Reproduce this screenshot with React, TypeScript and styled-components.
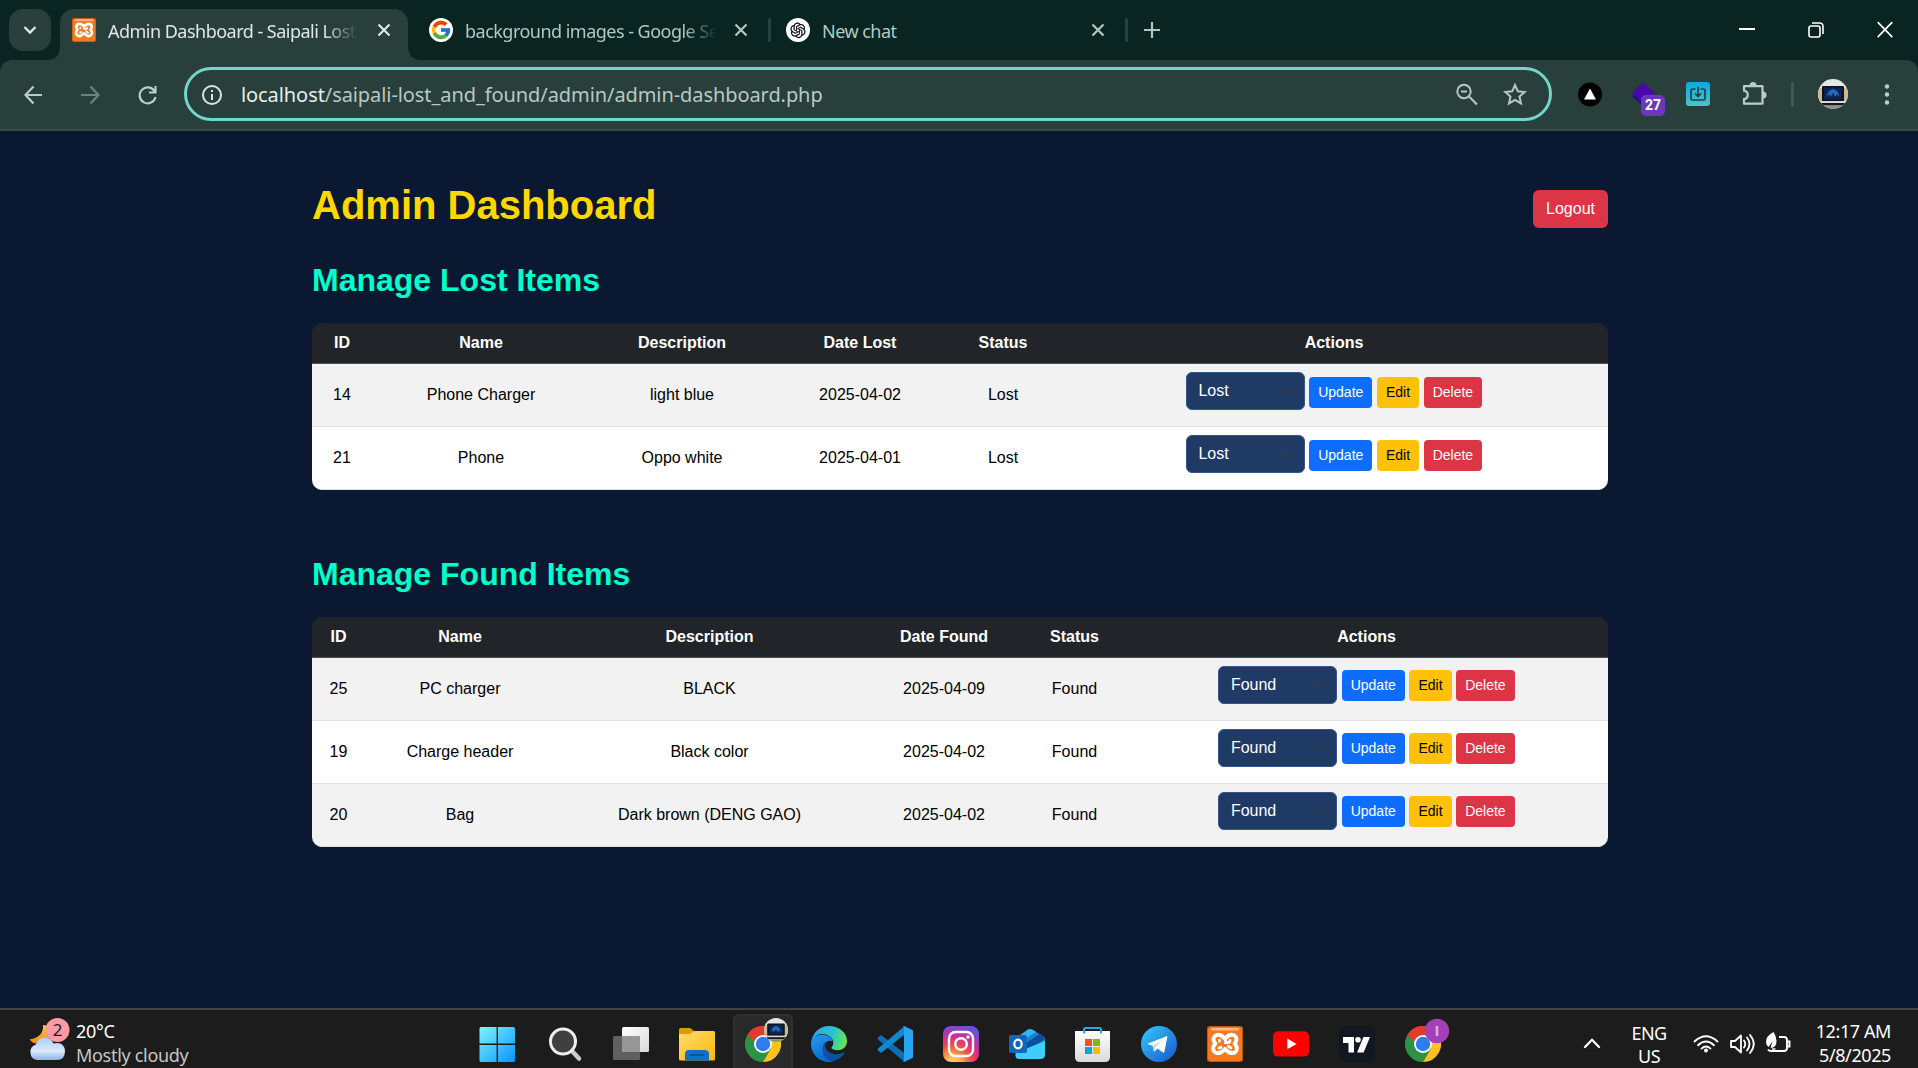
import React from "react";
import styled, { createGlobalStyle } from "styled-components";
import { FcGoogle } from "react-icons/fc";
import { AiOutlineOpenAI } from "react-icons/ai";

const GlobalStyle = createGlobalStyle`
  * { box-sizing: border-box; }
  body { margin: 0; background: #0a1931; overflow: hidden; }
  svg { display: block; flex: none; }
`;

const uiFont = `"Noto Sans", "Open Sans", sans-serif`;
const pageFont = `Arial, "Liberation Sans", sans-serif`;

const Screen = styled.div`
  width: 1918px;
  height: 1068px;
  display: flex;
  flex-direction: column;
  overflow: hidden;
  background: #0a1931;
`;

/* ---------- browser frame ---------- */

const TabStrip = styled.div`
  height: 60px;
  flex: none;
  display: flex;
  align-items: flex-start;
  padding: 9px 0 0 9px;
  background: #0a2421;
  font-family: ${uiFont};
`;

const TabSearch = styled.div`
  width: 42px;
  height: 42px;
  flex: none;
  display: flex;
  align-items: center;
  justify-content: center;
  border-radius: 14px;
  background: #283f3b;
`;

const Tab = styled.div<{ $width: number; $active?: boolean }>`
  position: relative;
  width: ${(p) => p.$width}px;
  height: ${(p) => (p.$active ? 51 : 42)}px;
  flex: none;
  display: flex;
  align-items: flex-start;
  padding: 9px 0 0 12px;
  border-radius: 14px 14px 0 0;
  background: ${(p) => (p.$active ? "#283f3b" : "transparent")};
  color: ${(p) => (p.$active ? "#dfe8e5" : "#afcac4")};
`;

const TabFlare = styled.svg<{ $side: "left" | "right" }>`
  position: absolute;
  bottom: 0;
  ${(p) => p.$side}: -14px;
`;

const TabTitle = styled.div<{ $width: number; $fade?: boolean }>`
  width: ${(p) => p.$width}px;
  margin-left: 12px;
  height: 26px;
  line-height: 26px;
  font-size: 18px;
  letter-spacing: -0.52px;
  white-space: nowrap;
  ${(p) =>
    p.$fade &&
    "mask-image: linear-gradient(to right, #000 calc(100% - 34px), transparent);"}
`;

const CloseMark = styled.div<{ $left: number }>`
  margin: 5px 0 0 ${(p) => p.$left}px;
`;

const TabDivider = styled.div<{ $left: number }>`
  width: 3px;
  height: 24px;
  flex: none;
  margin: 9px 0 0 ${(p) => p.$left}px;
  border-radius: 2px;
  background: #28413c;
`;

const RoundIcon = styled.div<{ $size: number; $bg: string }>`
  width: ${(p) => p.$size}px;
  height: ${(p) => p.$size}px;
  flex: none;
  display: flex;
  align-items: center;
  justify-content: center;
  border-radius: 50%;
  overflow: hidden;
  background: ${(p) => p.$bg};
`;

const NewTab = styled.div`
  margin: 13px 0 0 16px;
`;

const WindowControls = styled.div`
  display: flex;
  gap: 53px;
  margin: 12px 25px 0 auto;
`;

const ToolbarBack = styled.div`
  flex: none;
  background: #0a2421;
`;

const Toolbar = styled.div`
  height: 71px;
  display: flex;
  align-items: flex-start;
  padding: 7px 0 0 22px;
  border-radius: 12px 12px 0 0;
  border-bottom: 2px solid #3a4c47;
  background: #283f3b;
  font-family: ${uiFont};
`;

const ToolbarRow = styled.div`
  height: 54px;
  flex: 1;
  display: flex;
  align-items: center;
`;

const Slot = styled.div<{ $left?: number }>`
  flex: none;
  display: flex;
  margin-left: ${(p) => p.$left ?? 0}px;
`;

const AddressBar = styled.div`
  width: 1368px;
  height: 54px;
  flex: none;
  display: flex;
  align-items: center;
  margin-left: 26px;
  padding: 0 21px 0 13px;
  border: 3px solid #72d6c8;
  border-radius: 27px;
`;

const Url = styled.div`
  margin: 2px auto 0 19px;
  font-size: 20px;
  letter-spacing: -0.08px;
  line-height: 28px;
  color: #b9c8c4;
  white-space: nowrap;
  span { color: #e4efec; }
`;

const PurpleExtension = styled.div`
  position: relative;
  width: 34px;
  height: 24px;
  flex: none;
  margin-left: 29px;
`;

const ExtensionBadge = styled.div`
  position: absolute;
  left: 10px;
  top: 13px;
  width: 24px;
  height: 21px;
  border-radius: 5px;
  background: #6c38bb;
  color: #fff;
  font: bold 14px/21px Roboto, sans-serif;
  text-align: center;
`;

const ToolbarDivider = styled.div`
  width: 3px;
  height: 25px;
  flex: none;
  margin-left: 24px;
  border-radius: 2px;
  background: #3f5a55;
`;

/* ---------- dashboard page ---------- */

const Page = styled.main`
  flex: 1;
  min-height: 0;
  padding: 49px 310px 0 312px;
  background: #0a1931;
  font-family: ${pageFont};
`;

const PageHeader = styled.header`
  height: 48px;
  display: flex;
  justify-content: space-between;
`;

const Title = styled.h1`
  margin: 1px 0 0;
  font-size: 40px;
  line-height: 48px;
  color: #ffd700;
`;

const Logout = styled.button`
  width: 75px;
  height: 38px;
  margin-top: 10px;
  padding: 0;
  border: 0;
  border-radius: 6px;
  background: #dc3545;
  color: #fff;
  font: 16px/38px ${pageFont};
`;

const SectionTitle = styled.h2<{ $top: number }>`
  margin: ${(p) => p.$top}px 0 0;
  padding-bottom: 24px;
  font-size: 32px;
  line-height: 38px;
  color: #00ffcc;
`;

const TableCard = styled.div`
  width: 1296px;
  border-radius: 10px;
  overflow: hidden;
`;

const Table = styled.table`
  width: 100%;
  table-layout: fixed;
  border-collapse: separate;
  border-spacing: 0;
  font-size: 16px;
  line-height: 24px;
  text-align: center;
  color: #000;
`;

const HeadCell = styled.th<{ $width: number }>`
  width: ${(p) => p.$width}px;
  height: 41px;
  padding: 0 0 1px;
  border-bottom: 1px solid #4d5154;
  background: #212529;
  color: #fff;
`;

const BodyRow = styled.tr`
  background: #fff;
  &:nth-child(odd) { background: #f2f2f2; }
`;

const Cell = styled.td`
  height: 63px;
  padding: 0;
  border-bottom: 1px solid #dee2e6;
`;

const Actions = styled.div<{ $drop: number }>`
  height: 62px;
  display: flex;
  justify-content: center;
  align-items: flex-start;
  gap: 4.6px;
  padding-top: ${(p) => 12 + p.$drop}px;
`;

const StatusSelect = styled.div<{ $drop: number }>`
  width: 118.7px;
  height: 38px;
  display: flex;
  align-items: center;
  justify-content: space-between;
  margin-top: ${(p) => -4 - p.$drop}px;
  padding: 0 14px 0 11.5px;
  border: 1px solid #34568b;
  border-radius: 6px;
  background: #1f3a64;
  color: #fff;
`;

const SmallButton = styled.button<{ $bg: string; $fg?: string }>`
  height: 31px;
  padding: 0 9px;
  border: 0;
  border-radius: 4px;
  background: ${(p) => p.$bg};
  color: ${(p) => p.$fg ?? "#fff"};
  font: 14px/31px ${pageFont};
`;

/* ---------- taskbar ---------- */

const Taskbar = styled.footer`
  height: 60px;
  flex: none;
  display: flex;
  align-items: flex-start;
  border-top: 2px solid #424242;
  background: #1c1c1c;
  color: #fff;
  font-family: ${uiFont};
  font-size: 18px;
  line-height: 24px;
  overflow: hidden;
`;

const Weather = styled.div`
  width: 469px;
  flex: none;
  display: flex;
  padding: 8px 0 0 27px;
`;

const WeatherText = styled.div`
  margin: 1px 0 0 6px;
  letter-spacing: -0.3px;
  white-space: nowrap;
  div + div { color: #c6c6c6; }
`;

const Apps = styled.div`
  display: flex;
  gap: 6px;
  padding-top: 4px;
`;

const TaskbarApp = styled.div<{ $active?: boolean }>`
  position: relative;
  width: 60px;
  height: 60px;
  flex: none;
  display: flex;
  justify-content: center;
  padding-top: 12px;
  border-radius: 6px;
  background: ${(p) => (p.$active ? "#292929" : "transparent")};
  box-shadow: ${(p) => (p.$active ? "inset 0 0 0 2px #303030" : "none")};
`;

const AppBadge = styled.div`
  position: absolute;
  left: 31px;
  top: 4px;
`;

const Tray = styled.div`
  display: flex;
  align-items: flex-start;
  margin-left: auto;
  padding-right: 27px;
`;

const Language = styled.div`
  width: 44px;
  margin: 12px 0 0 26px;
  line-height: 23px;
  letter-spacing: -0.6px;
  text-align: center;
`;

const Clock = styled.div`
  width: 90px;
  margin: 9px 0 0 10px;
  letter-spacing: -0.4px;
  text-align: right;
  white-space: nowrap;
`;

/* ---------- drawings ---------- */

const Cross = ({ color }: { color: string }) => (
  <svg width="14" height="14" viewBox="0 0 14 14" stroke={color} strokeWidth="2.2">
    <path d="M1.5 1.5 12.5 12.5M12.5 1.5 1.5 12.5" />
  </svg>
);

const XamppIcon = ({ size }: { size: number }) => (
  <svg width={size} height={size} viewBox="0 0 36 36" fill="none">
    <rect width="36" height="36" rx="3" fill="#b95a16" />
    <rect x="1" y="1" width="34" height="34" rx="3" fill="#f47920" />
    <rect x="4" y="2" width="28" height="2.5" rx="1.2" fill="#fbb785" />
    <path
      d="M11.500 8.800c-3 0-5 2-5 4.500 0 2 .9 3.300 1.900 4.400-1.400 1.200-2.300 2.800-2.300 4.500 0 2.800 2.200 4.900 5 4.900 3.200 0 4.700-2 6.900-4.300 2.200 2.300 3.700 4.300 6.900 4.300 2.800 0 5-2.100 5-4.900 0-1.700-.9-3.300-2.300-4.500 1-1.100 1.900-2.400 1.900-4.400 0-2.500-2-4.500-5-4.500-3.200 0-4.300 1.500-6.500 4-2.200-2.500-3.300-4-6.500-4z"
      stroke="#fff"
      strokeWidth="4"
      strokeLinejoin="round"
    />
    <path d="M12.500 14.500v.8M23 14.500c0 1.300-.8 2-2.300 2h-2.200v-3M12 22l2-.9M24 22l-2.500-1.700" stroke="#fff" strokeWidth="2.800" strokeLinecap="round" />
  </svg>
);

const LaptopAvatar = ({ size }: { size: number }) => (
  <svg width={size} height={size} viewBox="0 0 30 30">
    <clipPath id={`avatar${size}`}><circle cx="15" cy="15" r="15" /></clipPath>
    <g clipPath={`url(#avatar${size})`}>
      <rect width="30" height="30" fill="#e6e6e8" />
      <rect y="9" width="30" height="14" fill="#cbb994" />
      <rect x="4" y="7" width="22" height="15.500" rx="1" fill="#10131c" />
      <rect x="6" y="8.500" width="18" height="12" fill="#0a2450" />
      <path d="M8.500 18q1-7 6.500-8 5.500 1 6.500 8l-2.500-3-1.500 3-2.500-4-2.500 4-1.500-3z" fill="#2469bd" />
      <rect x="1" y="22" width="28" height="2" fill="#d9d9dd" />
      <rect y="24" width="30" height="2.500" fill="#17181c" />
      <rect y="26.500" width="30" height="4" fill="#8f8f94" />
    </g>
  </svg>
);

const ChromeIcon = () => (
  <svg width="36" height="36" viewBox="0 0 36 36">
    <path d="M18 18 2.400 9A18 18 0 0 1 33.600 9z" fill="#e33b2e" />
    <path d="M2.400 9A18 18 0 0 0 18 36l7.800-13.500L18 18z" fill="#2d9344" />
    <path d="M33.600 9A18 18 0 0 1 18 36l7.800-13.500L18 9z" fill="#fcc31e" />
    <path d="M2.400 9 10.200 22.500 18 18V9z" fill="#2d9344" />
    <path d="M2.400 9A18 18 0 0 1 33.600 9H18a9 9 0 0 0-8.800 7.200L5.500 12z" fill="#e33b2e" />
    <circle cx="18" cy="18" r="9" fill="#fff" />
    <circle cx="18" cy="18" r="7.200" fill="#2f7cf0" />
  </svg>
);

const WindowsIcon = () => (
  <svg width="36" height="36" viewBox="0 0 36 36" overflow="visible">
    <linearGradient id="win" x1="0" y1="0" x2="1" y2="1">
      <stop stopColor="#80f3ff" /><stop offset="1" stopColor="#0794ff" />
    </linearGradient>
    <path d="M0 1h15.600v16.600H-1.500V2.500Q-1.500 1 0 1zM17 1h15.500q1.500 0 1.500 1.500v15.100H17zM-1.500 19h17.100v17H0q-1.500 0-1.500-1.500zM17 19h17v15.500q0 1.500-1.500 1.500H17z" fill="url(#win)" />
  </svg>
);

const SearchIcon = () => (
  <svg width="36" height="36" viewBox="0 0 36 36">
    <path d="m25 25 7 7.500" stroke="#c9ccd0" strokeWidth="4.500" strokeLinecap="round" />
    <circle cx="16" cy="15.500" r="12.500" fill="#3f3f3f" stroke="#eceef0" strokeWidth="3" />
  </svg>
);

const TaskViewIcon = () => (
  <svg width="36" height="36" viewBox="0 0 36 36">
    <linearGradient id="tv" x1="0" y1="0" x2="1" y2="1"><stop stopColor="#fff" /><stop offset="1" stopColor="#d9d9d9" /></linearGradient>
    <rect y="10" width="27" height="24" rx="1.500" fill="#606060" />
    <rect x="9" y="1" width="27" height="25" rx="1.500" fill="url(#tv)" />
    <path d="M9 10h18v16H9z" fill="#969696" />
  </svg>
);

const FolderIcon = () => (
  <svg width="36" height="36" viewBox="0 0 36 36">
    <linearGradient id="fold" x1="0" y1="0" x2="1" y2="1"><stop stopColor="#ffdc6c" /><stop offset="1" stopColor="#fbb80f" /></linearGradient>
    <path d="M0 4q0-2 2-2h8q1.500 0 2.500 1l3 2.500V10H0z" fill="#dd9c06" />
    <path d="M0 8h10q1.500 0 3-1.500T16 5h18.500q1.500 0 1.500 1.500V33q0 1.500-1.500 1.500h-33Q0 34.500 0 33z" fill="url(#fold)" />
    <path d="M6 34.500V28q0-4 4-4h16q4 0 4 4v6.500z" fill="#0f71c4" />
    <path d="M11 29h14" stroke="#0a4a8a" strokeWidth="1.500" strokeLinecap="round" />
  </svg>
);

const EdgeIcon = () => (
  <svg width="36" height="36" viewBox="0 0 36 36">
    <linearGradient id="edgeTop" x1="0" y1=".3" x2="1" y2=".5"><stop stopColor="#2aa7ec" /><stop offset=".55" stopColor="#27c3cf" /><stop offset="1" stopColor="#66e552" /></linearGradient>
    <linearGradient id="edgeSide" x1="0" y1="0" x2=".4" y2="1"><stop stopColor="#249ce8" /><stop offset="1" stopColor="#0a6ad0" /></linearGradient>
    <path d="M.3 17C.8 7 8.500 0 18 0c10.500 0 18 7 18 15 0 5.500-4 9.300-9 9.300-4 0-6.500-1.300-6.500-2.500 0-1 1.800-1.800 1.800-5C22.300 11 16 8 11 8 5 8 1.500 12 .3 17z" fill="url(#edgeTop)" />
    <path d="M0 18C0 12 5 8.800 11 8.800c6 0 10.500 3 10.500 6.500-5-2-9.500 2-9.500 8 0 6 4.500 11.500 11 11.700C21.500 35.700 20 36 18 36 8 36 0 28 0 18z" fill="url(#edgeSide)" />
    <path d="M15 15.500c-2 1.800-3.500 4.500-3.500 8C11.500 30 17 35 23 35c4.500-1.300 8-4 10.300-7.500.5-.8-.2-1.300-1-.9-8 3.800-18 .400-18-7.600 0-1.500.2-2.500.7-3.500z" fill="#11509f" />
  </svg>
);

const VsCodeIcon = () => (
  <svg width="36" height="36" viewBox="0 0 36 36">
    <path d="M1 11.500 3 9.700q1-.8 2 0L27 27v8.500L1 13.500q-1-1 0-2z" fill="#0b6fb5" />
    <path d="M1 24.500 3 26.300q1 .8 2 0L27 9V.5L1 22.500q-1 1 0 2z" fill="#1187ce" />
    <path d="M26 .5q.7-.7 1.700-.2L35 3.800q1 .5 1 1.500v25.400q0 1-1 1.500l-7.300 3.500q-1 .5-1.700-.2 1-.5 1-2V2.500q0-1.500-1-2z" fill="#28a3f0" />
  </svg>
);

const InstagramIcon = () => (
  <svg width="36" height="36" viewBox="0 0 36 36" fill="none">
    <radialGradient id="ig" cx=".28" cy="1.05" r="1.100"><stop stopColor="#ffdc70" /><stop offset=".2" stopColor="#fdb650" /><stop offset=".45" stopColor="#f5503f" /><stop offset=".7" stopColor="#cf2c94" /><stop offset="1" stopColor="#6255d6" /></radialGradient>
    <rect width="36" height="36" rx="8" fill="url(#ig)" />
    <rect x="6" y="6" width="24" height="24" rx="6.500" stroke="#fff" strokeWidth="2.400" />
    <circle cx="18" cy="18" r="5.800" stroke="#fff" strokeWidth="2.400" />
    <circle cx="25" cy="11" r="1.700" fill="#fff" />
  </svg>
);

const OutlookIcon = () => (
  <svg width="36" height="36" viewBox="0 0 36 36">
    <path d="M8 11 19 3.500q2-1 4 0L34 10q2 1.200 2 3v8L22 30H8z" fill="#1683d8" />
    <path d="M9 11 19 3.500q2-1 4 0l4 2.300L12 16H9z" fill="#35b4ee" />
    <path d="M17 17 30.500 8l3.500 2q2 1.200 2 3l-18 12z" fill="#0a4fa0" />
    <path d="M6.500 27 36 15v13.500q0 4.500-4.500 4.500H10.500q-4 0-4-3z" fill="#40cdf7" />
    <rect y="9" width="18" height="18" rx="2" fill="#0f67bd" />
    <ellipse cx="9" cy="18" rx="3.700" ry="4.300" fill="none" stroke="#fff" strokeWidth="2.200" />
  </svg>
);

const StoreIcon = () => (
  <svg width="36" height="36" viewBox="0 0 36 36">
    <linearGradient id="store" x1="0" y1="0" x2="0" y2="1"><stop stopColor="#fff" /><stop offset="1" stopColor="#d9d9d9" /></linearGradient>
    <path d="M0 5h35v26q0 5-5 5H5q-5 0-5-5z" fill="url(#store)" />
    <path d="M9 7.500V3.500q0-1.500 1.500-1.500h14q1.500 0 1.500 1.500v4" fill="none" stroke="#27a9e0" strokeWidth="2" />
    <path d="M10 13h7v7h-7z" fill="#f25022" /><path d="M18 13h7v7h-7z" fill="#7fba00" />
    <path d="M10 21h7v7h-7z" fill="#00a4ef" /><path d="M18 21h7v7h-7z" fill="#ffb900" />
  </svg>
);

const TelegramIcon = () => (
  <svg width="36" height="36" viewBox="0 0 36 36">
    <linearGradient id="tg" x1=".1" y1=".1" x2=".9" y2=".9"><stop stopColor="#2fc0fb" /><stop offset="1" stopColor="#1e5fd0" /></linearGradient>
    <circle cx="18" cy="18" r="18" fill="url(#tg)" />
    <path d="M7 17.600 25.500 10.300q1-.3.8 1L23.300 26q-.3 1.200-1.300.6l-5.500-4-2.800 2.600q-.8.6-1-.4l-1-5-4.700-1.500q-.8-.4 0-.7z" fill="#fff" />
    <path d="m12.500 19.500 9.500-6-7.500 7.200-.8 4.200z" fill="#b9d6f3" />
  </svg>
);

const YoutubeIcon = () => (
  <svg width="36" height="36" viewBox="0 0 36 36">
    <rect y="5.200" width="36" height="25.400" rx="5" fill="#f00" />
    <path d="m14.300 12.500 9.300 5.400-9.300 5.400z" fill="#fff" />
  </svg>
);

const TradingViewIcon = () => (
  <svg width="36" height="36" viewBox="0 0 36 36">
    <rect width="36" height="36" rx="6" fill="#131722" />
    <g fill="#fff"><path d="M4 11h11v15.500H9.500V17H4z" /><circle cx="19" cy="13.800" r="2.800" /><path d="M24.500 11H31l-6.400 15.500h-6.500z" /></g>
  </svg>
);

const WeatherIcon = () => (
  <svg width="43" height="42" viewBox="0 0 43 42">
    <linearGradient id="moon" x1="0" y1="0" x2="0" y2="1"><stop stopColor="#ffc83d" /><stop offset="1" stopColor="#f08a1d" /></linearGradient>
    <linearGradient id="cloud" x1="0" y1="0" x2="0" y2="1"><stop stopColor="#a9cdf8" /><stop offset=".6" stopColor="#dce9fa" /><stop offset="1" stopColor="#8ab2f0" /></linearGradient>
    <path d="M16 7q1 12-13.500 14.500Q7 27 15 26L29 13Q22 7 16 7z" fill="url(#moon)" />
    <path d="M10 42a8 8 0 0 1-1-15.500Q11 19.500 18 19.500q6 0 8.500 6Q37 23 38 33q0 9-8 9z" fill="url(#cloud)" />
    <circle cx="30.500" cy="12" r="12" fill="#ff99a4" />
    <text x="30.500" y="18" textAnchor="middle" fontSize="17" fontFamily="Noto Sans, sans-serif" fill="#1b1b1b">2</text>
  </svg>
);

/* ---------- data ---------- */

type Item = [string, string, string, string, string];

const lostItems: Item[] = [
  ["14", "Phone Charger", "light blue", "2025-04-02", "Lost"],
  ["21", "Phone", "Oppo white", "2025-04-01", "Lost"],
];

const foundItems: Item[] = [
  ["25", "PC charger", "BLACK", "2025-04-09", "Found"],
  ["19", "Charge header", "Black color", "2025-04-02", "Found"],
  ["20", "Bag", "Dark brown (DENG GAO)", "2025-04-02", "Found"],
];

const ItemsTable = ({
  dateLabel,
  widths,
  items,
  drop,
}: {
  dateLabel: string;
  widths: number[];
  items: Item[];
  drop: number;
}) => (
  <TableCard>
    <Table>
      <thead>
        <tr>
          {["ID", "Name", "Description", dateLabel, "Status", "Actions"].map((h, i) => (
            <HeadCell key={h} $width={widths[i]}>{h}</HeadCell>
          ))}
        </tr>
      </thead>
      <tbody>
        {items.map((item) => (
          <BodyRow key={item[0]}>
            {item.map((value, i) => <Cell key={i}>{value}</Cell>)}
            <Cell>
              <Actions $drop={drop}>
                <StatusSelect $drop={drop}>
                  {item[4]}
                  <svg width="12" height="12" viewBox="0 0 16 16" fill="none" stroke="#343a40" strokeWidth="2" strokeLinecap="round">
                    <path d="m2 5 6 6 6-6" />
                  </svg>
                </StatusSelect>
                <SmallButton $bg="#0d6efd">Update</SmallButton>
                <SmallButton $bg="#ffc107" $fg="#000">Edit</SmallButton>
                <SmallButton $bg="#dc3545">Delete</SmallButton>
              </Actions>
            </Cell>
          </BodyRow>
        ))}
      </tbody>
    </Table>
  </TableCard>
);

const appIcons = [
  WindowsIcon, SearchIcon, TaskViewIcon, FolderIcon, ChromeIcon, EdgeIcon, VsCodeIcon,
  InstagramIcon, OutlookIcon, StoreIcon, TelegramIcon, () => <XamppIcon size={36} />,
  YoutubeIcon, TradingViewIcon, ChromeIcon,
];

export default function App() {
  return (
    <Screen>
      <GlobalStyle />
      <TabStrip>
        <TabSearch>
          <svg width="14" height="14" viewBox="0 0 14 14" fill="none" stroke="#dfe8e5" strokeWidth="2.400">
            <path d="m1.500 4 5.500 5.500L12.500 4" />
          </svg>
        </TabSearch>
        <Slot $left={9} />
        <Tab $width={348} $active>
          <TabFlare $side="left" width="14" height="14"><path d="M14 0v14H0Q14 14 14 0z" fill="#283f3b" /></TabFlare>
          <XamppIcon size={24} />
          <TabTitle $width={250} $fade>Admin Dashboard - Saipali Lost</TabTitle>
          <CloseMark $left={19}><Cross color="#dfe8e5" /></CloseMark>
          <TabFlare $side="right" width="14" height="14"><path d="M0 0v14h14Q0 14 0 0z" fill="#283f3b" /></TabFlare>
        </Tab>
        <Slot $left={9} />
        <Tab $width={351}>
          <RoundIcon $size={24} $bg="#fff"><FcGoogle size={22} /></RoundIcon>
          <TabTitle $width={252} $fade>background images - Google Se</TabTitle>
          <CloseMark $left={17}><Cross color="#afcac4" /></CloseMark>
        </Tab>
        <TabDivider $left={0} />
        <Slot $left={3} />
        <Tab $width={351}>
          <RoundIcon $size={24} $bg="#fff"><AiOutlineOpenAI size={20} color="#111" /></RoundIcon>
          <TabTitle $width={252}>New chat</TabTitle>
          <CloseMark $left={17}><Cross color="#afcac4" /></CloseMark>
        </Tab>
        <TabDivider $left={0} />
        <NewTab>
          <svg width="16" height="16" stroke="#afcac4" strokeWidth="2.200"><path d="M8 0v16M0 8h16" /></svg>
        </NewTab>
        <WindowControls>
          <svg width="16" height="18" stroke="#fff" strokeWidth="2"><path d="M0 8h16" /></svg>
          <svg width="16" height="18" fill="none" stroke="#fff" strokeWidth="1.600">
            <rect x="1" y="5" width="11" height="11" rx="2" />
            <path d="M4 2h7.500Q15 2 15 5.500V13" />
          </svg>
          <svg width="16" height="18" stroke="#fff" strokeWidth="1.700"><path d="m.7 1.200 14.600 15M15.300 1.200.7 16.200" /></svg>
        </WindowControls>
      </TabStrip>
      <ToolbarBack>
        <Toolbar>
          <ToolbarRow>
            <svg width="22" height="22" fill="none" stroke="#b5cfc9" strokeWidth="2.200"><path d="M20 12H4M11.500 3.500 3.500 12l8 8.500" /></svg>
            <Slot $left={36}>
              <svg width="22" height="22" fill="none" stroke="#6b827d" strokeWidth="2.200"><path d="M1 12h17M10.500 3.500l8 8.500-8 8.500" /></svg>
            </Slot>
            <Slot $left={34}>
              <svg width="22" height="22" fill="none" stroke="#b5cfc9" strokeWidth="2.200"><path d="M18.700 8.500A8 8 0 1 0 19.500 14M19.500 3V9.500H13" /></svg>
            </Slot>
            <AddressBar>
              <svg width="22" height="24" fill="none" stroke="#dbe8e5" strokeWidth="2">
                <circle cx="12" cy="13" r="9" /><path d="M12 12v6M12 8v2" />
              </svg>
              <Url><span>localhost</span>/saipali-lost_and_found/admin/admin-dashboard.php</Url>
              <svg width="24" height="24" fill="none" stroke="#b9c8c4" strokeWidth="2">
                <circle cx="9" cy="9.500" r="6.700" /><path d="M6 9.500h6M14 14.500l8 8" />
              </svg>
              <Slot $left={23}>
                <svg width="26" height="26" viewBox="0 0 26 26" fill="none" stroke="#b9c8c4" strokeWidth="2">
                  <path d="m13 4 2.800 6.300 6.900.7-5.200 4.600 1.500 6.800-6-3.600-6 3.600 1.500-6.800L3.300 11l6.900-.7z" />
                </svg>
              </Slot>
            </AddressBar>
            <Slot $left={26}>
              <svg width="24" height="26"><circle cx="12" cy="13.500" r="12" /><path d="m12 7.500 6 11H6z" fill="#fff" /></svg>
            </Slot>
            <PurpleExtension>
              <svg width="24" height="24"><path d="m1 14 4-3 12 9-5 4z" fill="#25107a" /><path d="M1 10.500 12 1l12 9.500L12 21z" fill="#4709ad" /></svg>
              <ExtensionBadge>27</ExtensionBadge>
            </PurpleExtension>
            <Slot $left={21}>
              <svg width="24" height="24" fill="none">
                <linearGradient id="dl" x1="0" y1="0" x2="0" y2="1"><stop stopColor="#08a9e2" /><stop offset="1" stopColor="#4dc4c4" /></linearGradient>
                <rect width="24" height="24" rx="3" fill="url(#dl)" />
                <path d="M9.500 7H6.500Q5 7 5 8.500v8Q5 18 6.500 18h11q1.500 0 1.500-1.500v-8Q19 7 17.500 7h-3M12 5v9M9 11.500l3 3 3-3" stroke="#1d4148" strokeWidth="1.700" />
              </svg>
            </Slot>
            <Slot $left={31}>
              <svg width="26" height="26" fill="none" stroke="#b5cfc9" strokeWidth="2.200" strokeLinejoin="round">
                <path d="M3 5.200h18.500v17.500H3v-4.500c5-1 5-7.500 0-8.500z" />
                <path d="M9.500 4.500a2.500 2.500 0 0 1 5 0M22 11.500a2.500 2.500 0 0 1 0 5" fill="#b5cfc9" />
              </svg>
            </Slot>
            <ToolbarDivider />
            <Slot $left={24}><LaptopAvatar size={30} /></Slot>
            <Slot $left={36}>
              <svg width="6" height="22" fill="#b5cfc9"><circle cx="3" cy="3.500" r="2.200" /><circle cx="3" cy="11.500" r="2.200" /><circle cx="3" cy="19.500" r="2.200" /></svg>
            </Slot>
          </ToolbarRow>
        </Toolbar>
      </ToolbarBack>

      <Page>
        <PageHeader>
          <Title>Admin Dashboard</Title>
          <Logout>Logout</Logout>
        </PageHeader>
        <SectionTitle $top={33}>Manage Lost Items</SectionTitle>
        <ItemsTable dateLabel="Date Lost" widths={[60, 218, 184, 172, 114, 548]} items={lostItems} drop={1} />
        <SectionTitle $top={65}>Manage Found Items</SectionTitle>
        <ItemsTable dateLabel="Date Found" widths={[53, 190, 309, 160, 101, 483]} items={foundItems} drop={0} />
      </Page>

      <Taskbar>
        <Weather>
          <WeatherIcon />
          <WeatherText><div>20°C</div><div>Mostly cloudy</div></WeatherText>
        </Weather>
        <Apps>
          {appIcons.map((Icon, i) => (
            <TaskbarApp key={i} $active={i === 4}>
              <Icon />
              {i === 4 && <AppBadge><LaptopAvatar size={24} /></AppBadge>}
              {i === 14 && (
                <AppBadge>
                  <svg width="26" height="26"><circle cx="13" cy="13" r="12.200" fill="#a53fb8" /><path d="M13 8v10" stroke="#dba9e3" strokeWidth="2.600" /></svg>
                </AppBadge>
              )}
            </TaskbarApp>
          ))}
        </Apps>
        <Tray>
          <svg width="18" height="60" fill="none" stroke="#fff" strokeWidth="2.200" strokeLinecap="round"><path d="m2 37 7-7.200 7 7.200" /></svg>
          <Language><div>ENG</div><div>US</div></Language>
          <Slot $left={22}>
            <svg width="26" height="60" fill="none" stroke="#fff" strokeWidth="1.900">
              <path d="M1.500 31.500q11.500-10.500 23 0M5 35.200q8-7.500 16 0M8.500 38.600q4.500-4 9 0" strokeLinecap="round" />
              <circle cx="13" cy="40.500" r="2" fill="#fff" stroke="none" />
            </svg>
          </Slot>
          <Slot $left={10}>
            <svg width="26" height="60" fill="none" stroke="#fff" strokeWidth="1.800" strokeLinejoin="round">
              <path d="M2 31h4l6-5.500v17L6 37H2z" />
              <path d="M15 30.500q2.500 3.500 0 7M18 27.500q5 6.500 0 13M21 25q7.500 9 0 18" strokeLinecap="round" />
            </svg>
          </Slot>
          <Slot $left={10}>
            <svg width="26" height="60" fill="none" stroke="#fff" strokeWidth="1.900">
              <path d="M14 27h5q3 0 3 3v8q0 3-3 3H6q-2 0-3-1.500M23 31.500h1.500v5H23" />
              <path d="M8.500 22Q1 26 1 32q.2 3.500 2.500 5l4-5.500-2 6.500q6 0 6-7Q11 25.500 8.500 22z" fill="#fff" stroke="none" />
              <path d="M7 39h3.500" strokeWidth="1.400" />
            </svg>
          </Slot>
          <Clock><div>12:17 AM</div><div>5/8/2025</div></Clock>
        </Tray>
      </Taskbar>
    </Screen>
  );
}
